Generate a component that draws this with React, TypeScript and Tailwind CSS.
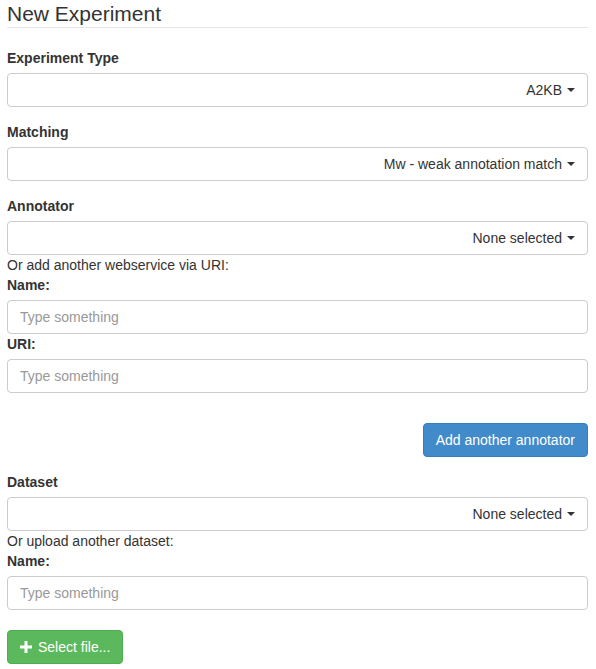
import React from 'react';

function Caret() {
    return (
        <span className="inline-block w-0 h-0 border-t-[4px] border-t-[#333] border-l-[4px] border-r-[4px] border-l-transparent border-r-transparent" />
    );
}

function SelectBox({ value }: { value: string }) {
    return (
        <button
            type="button"
            className="w-full h-[34px] flex items-center justify-end gap-[5px] px-[12px] bg-white border border-[#ccc] rounded-[4px] text-[#333] text-[14px] leading-[20px]"
        >
            <span>{value}</span>
            <Caret />
        </button>
    );
}

function TextInput() {
    return (
        <input
            type="text"
            placeholder="Type something"
            className="block w-full h-[34px] px-[12px] bg-white border border-[#ccc] rounded-[4px] text-[14px] text-[#555] placeholder:text-[#999] outline-none"
        />
    );
}

function Label({ children }: { children: React.ReactNode }) {
    return <label className="block font-bold mb-[5px]">{children}</label>;
}

export default function App() {
    return (
        <div className="pl-[7px] pr-[8px] font-['Liberation_Sans',Arial,sans-serif] text-[14px] leading-[20px] text-[#333] bg-white">
            <div className="text-[21px] leading-[27px] border-b border-[#e5e5e5] mb-[20px]">New Experiment</div>

            <div className="mb-[15px]">
                <Label>Experiment Type</Label>
                <SelectBox value="A2KB" />
            </div>

            <div className="mb-[15px]">
                <Label>Matching</Label>
                <SelectBox value="Mw - weak annotation match" />
            </div>

            <div>
                <Label>Annotator</Label>
                <SelectBox value="None selected" />
                <div>Or add another webservice via URI:</div>
                <Label>Name:</Label>
                <TextInput />
                <label className="block font-bold mb-[5px]">URI:</label>
                <TextInput />
            </div>

            <div className="flex justify-end mt-[30px] mb-[15px]">
                <button
                    type="button"
                    className="h-[34px] px-[12px] rounded-[4px] bg-[#428bca] border border-[#357ebd] text-white text-[14px]"
                >
                    Add another annotator
                </button>
            </div>

            <div className="mb-[20px]">
                <Label>Dataset</Label>
                <SelectBox value="None selected" />
                <div>Or upload another dataset:</div>
                <Label>Name:</Label>
                <TextInput />
            </div>

            <button
                type="button"
                className="h-[34px] px-[12px] rounded-[4px] bg-[#5cb85c] border border-[#4cae4c] text-white text-[14px] flex items-center gap-[6px]"
            >
                <svg width="12" height="12" viewBox="0 0 12 12" className="shrink-0">
                    <path d="M4.5 0h3v4.5H12v3H7.5V12h-3V7.5H0v-3h4.5z" fill="white" />
                </svg>
                <span>Select file...</span>
            </button>
        </div>
    );
}
